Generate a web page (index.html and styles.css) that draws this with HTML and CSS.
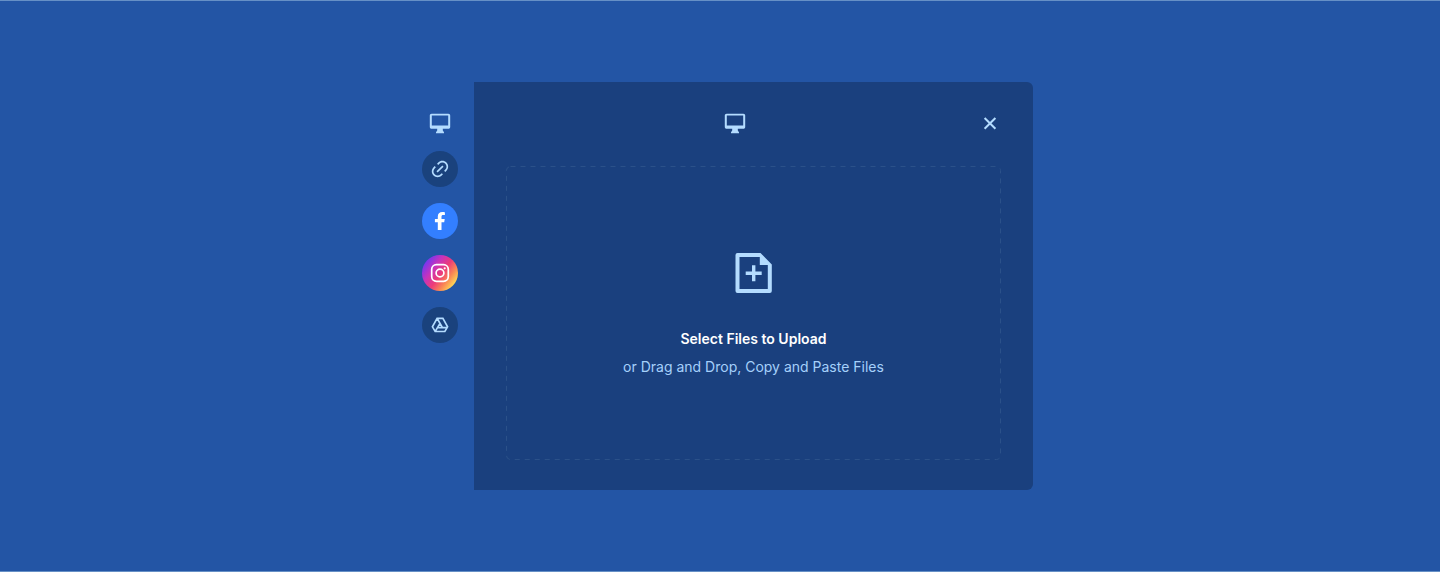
FILE: index.html
```html
<!DOCTYPE html>
<html lang="en">
<head>
<meta charset="utf-8">
<title>File uploader</title>
<link rel="stylesheet" href="styles.css">
</head>
<body>
<main class="stage">
  <nav class="sources">
    <button class="source source-plain" aria-label="My device">
      <svg width="24" height="24" viewBox="0 0 24 24" fill="currentColor"><path fill-rule="evenodd" d="M3.600 2.700h16.800c1 0 1.800.8 1.800 1.800v11.400c0 1-.8 1.800-1.800 1.800h-5.600v1.700l1.200 1.800v1H8v-1l1.200-1.800v-1.700H3.600c-1 0-1.800-.8-1.800-1.800V4.500c0-1 .8-1.800 1.800-1.800zm.2 1.900v10h16.400v-10z"/></svg>
    </button>
    <button class="source source-dark" aria-label="Link">
      <svg width="20" height="20" viewBox="0 0 24 24" fill="currentColor"><path d="M18.364 15.536L16.950 14.121L18.364 12.707C20.316 10.755 20.316 7.589 18.364 5.636C16.411 3.683 13.245 3.683 11.293 5.636L9.878 7.050L8.464 5.636L9.878 4.222C12.612 1.488 17.044 1.488 19.778 4.222C22.512 6.955 22.512 11.388 19.778 14.121L18.364 15.536ZM15.535 18.364L14.121 19.778C11.388 22.512 6.955 22.512 4.222 19.778C1.488 17.045 1.488 12.612 4.222 9.879L5.636 8.464L7.050 9.879L5.636 11.293C3.683 13.245 3.683 16.411 5.636 18.364C7.588 20.317 10.754 20.317 12.707 18.364L14.121 16.950L15.535 18.364ZM14.828 7.757L16.243 9.172L9.171 16.243L7.757 14.828L14.828 7.757Z"/></svg>
    </button>
    <button class="source source-facebook" aria-label="Facebook">
      <svg width="20" height="20" viewBox="0 0 20 20" fill="currentColor"><path d="M7.800 19v-7.700H4.900V8h2.900V5.400C7.800 2.500 9.500.9 12.200.9c1.200 0 2.300.2 2.700.3v2.900h-1.600c-1.400 0-1.800.7-1.800 1.600V8h3.200l-.5 3.300h-2.700V19z"/></svg>
    </button>
    <button class="source source-instagram" aria-label="Instagram">
      <svg width="20" height="20" viewBox="0 0 20 20" fill="none" stroke="currentColor" stroke-width="1.700"><rect x="1.700" y="1.700" width="16.600" height="16.600" rx="4.700"/><circle cx="10" cy="10" r="3.900"/><circle cx="14.700" cy="5.300" r="1.100" fill="currentColor" stroke="none"/></svg>
    </button>
    <button class="source source-dark" aria-label="Google Drive">
      <svg width="20" height="20" viewBox="0 0 24 24" fill="none" stroke="currentColor" stroke-width="2"><path d="M8.500 4h7l5.600 10.200-3.300 5.600H6.200l-3.300-5.600zM8.800 4.500L15 15.200h5.600M12 10l-5.700 9.600M9.200 15.200H15"/></svg>
    </button>
  </nav>
  <section class="panel">
    <header class="panel-header">
      <svg class="device" width="24" height="24" viewBox="0 0 24 24" fill="currentColor"><path fill-rule="evenodd" d="M3.600 2.700h16.800c1 0 1.800.8 1.800 1.800v11.400c0 1-.8 1.800-1.800 1.800h-5.600v1.700l1.200 1.800v1H8v-1l1.200-1.800v-1.700H3.600c-1 0-1.800-.8-1.800-1.800V4.500c0-1 .8-1.800 1.800-1.800zm.2 1.900v10h16.400v-10z"/></svg>
      <button class="close" aria-label="Close">
        <svg width="24" height="24" viewBox="0 0 24 24" fill="none" stroke="currentColor" stroke-width="2"><path d="M6.600 7l10.800 10.800M17.400 7L6.600 17.800"/></svg>
      </button>
    </header>
    <div class="dropzone">
      <svg class="outline" width="496" height="294" fill="none"><rect x=".5" y=".5" width="494" height="293" rx="4"/></svg>
      <svg class="file" width="38" height="40" viewBox="0 0 38 40" fill="currentColor"><path fill-rule="evenodd" d="M2.500 0H25.500L36.800 11.500V38a2 2 0 0 1-2 2H2.500a2 2 0 0 1-2-2V2a2 2 0 0 1 2-2zm2 4v32h28.300V12h-8V4zM17 12.200h3.400v6.300h6.300v3.400h-6.300v6.300H17v-6.300h-6.300v-3.400H17z"/></svg>
      <h1 class="title">Select Files to Upload</h1>
      <p class="hint">or Drag and Drop, Copy and Paste Files</p>
    </div>
  </section>
</main>
</body>
</html>
```
FILE: styles.css
```css
* { box-sizing: border-box; }

body {
  margin: 0;
  font-family: Inter, "Liberation Sans", sans-serif;
}

button {
  border: 0;
  padding: 0;
  background: none;
  color: inherit;
}

svg { display: block; }

.stage {
  height: 572px;
  padding: 81px 0 0 422px;
  display: flex;
  align-items: flex-start;
  gap: 16px;
  background: #2355a5;
  border-top: 1px solid #6690c6;
  border-bottom: 1px solid #6690c6;
  color: #b4dcff;
}

.sources {
  display: flex;
  flex-direction: column;
  gap: 16px;
  padding-top: 29px;
}

.source {
  width: 36px;
  height: 36px;
  border-radius: 50%;
  display: flex;
  align-items: center;
  justify-content: center;
}

.source-plain {
  height: 24px;
  margin-bottom: -0.5px;
}

.source-dark { background: #1a427d; }

.source-facebook {
  background: #337fff;
  color: #fff;
}

.source-instagram {
  background: linear-gradient(127deg, #6d37f5 12%, #c633bd 34%, #ed3c78 53%, #fa8754 70%, #ffdc55 87%);
  color: #fff;
}

.panel {
  width: 559px;
  height: 408px;
  padding: 29px 32px 0;
  background: #1a407e;
  border-radius: 0 6px 6px 0;
}

.panel-header {
  height: 24px;
  margin-bottom: 31px;
  display: flex;
  justify-content: space-between;
}

.device { margin-left: 216.5px; }

.close { margin-right: -1px; }

.dropzone {
  position: relative;
  width: 495px;
  height: 294px;
  padding-top: 87px;
  display: flex;
  flex-direction: column;
  align-items: center;
}

.outline {
  position: absolute;
  left: 0;
  top: 0;
  stroke: #2b5189;
  stroke-dasharray: 5 5;
}

.title {
  margin: 36px 0 0;
  font-size: 14px;
  line-height: 20px;
  font-weight: 600;
  color: #fff;
}

.hint {
  margin: 8px 0 0;
  font-size: 14px;
  line-height: 20px;
  color: #a5d0fb;
}
```
